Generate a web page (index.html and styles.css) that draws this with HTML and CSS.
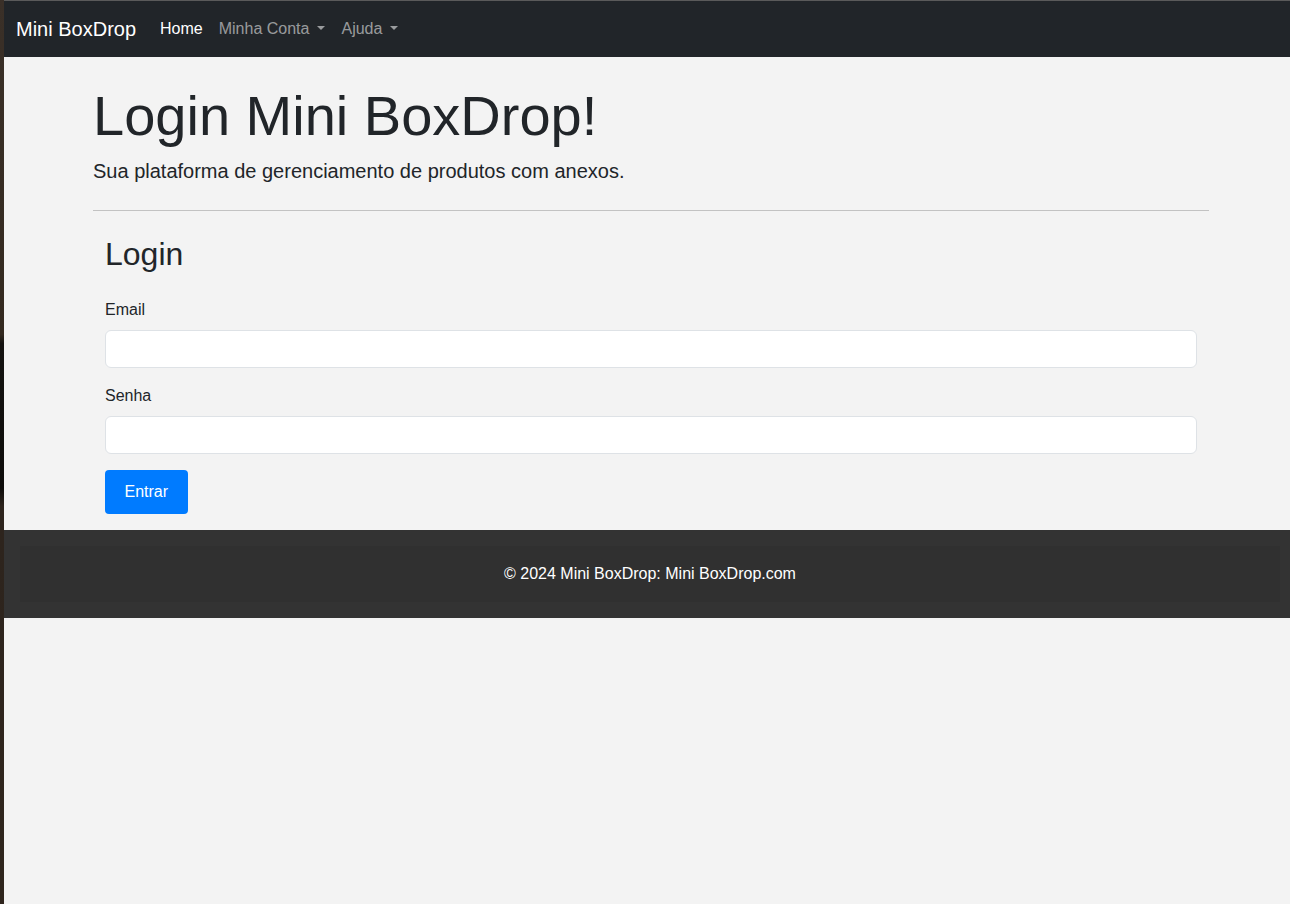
FILE: index.html
```html
<!DOCTYPE html>
<html lang="pt-BR">
<head>
<meta charset="utf-8">
<title>Login Mini BoxDrop</title>
<link rel="stylesheet" href="styles.css">
</head>
<body>
<div class="desktop">
  <div class="edge"></div>
  <div class="window">
    <nav class="navbar">
      <a class="brand" href="#">Mini BoxDrop</a>
      <ul class="nav">
        <li><a class="nav-link active" href="#">Home</a></li>
        <li><a class="nav-link dropdown" href="#">Minha Conta</a></li>
        <li><a class="nav-link dropdown" href="#">Ajuda</a></li>
      </ul>
    </nav>
    <main class="main">
      <h1 class="display">Login Mini BoxDrop!</h1>
      <p class="lead">Sua plataforma de gerenciamento de produtos com anexos.</p>
      <hr class="divider">
      <section class="login">
        <h2 class="login-title">Login</h2>
        <form class="form">
          <div class="form-group">
            <label class="label" for="email">Email</label>
            <input class="input" id="email" type="email">
          </div>
          <div class="form-group">
            <label class="label" for="senha">Senha</label>
            <input class="input" id="senha" type="password">
          </div>
          <button class="btn" type="button">Entrar</button>
        </form>
      </section>
    </main>
    <footer class="footer">
      <div class="footer-inner">© 2024 Mini BoxDrop: Mini BoxDrop.com</div>
    </footer>
  </div>
</div>
</body>
</html>
```
FILE: styles.css
```css
* { box-sizing: border-box; }
html, body { margin: 0; padding: 0; }
body {
  font-family: "Liberation Sans", Arial, sans-serif;
  font-size: 16px;
  line-height: 1.5;
  color: #212529;
  background: #f3f3f3;
}
.desktop {
  display: flex;
  min-height: 904px;
}
.edge {
  width: 4px;
  flex: none;
  background: linear-gradient(to bottom, #3a3028 0%, #33291f 37%, #141311 38%, #0d0c0a 54%, #2d241d 56%, #2f251d 100%);
}
.window {
  flex: 1;
  border-top: 1px solid #5a5a5a;
  background: #f3f3f3;
}
.navbar {
  height: 56px;
  background: #212529;
  display: flex;
  align-items: center;
  padding: 0 12px;
}
.brand {
  color: #fff;
  font-size: 20px;
  line-height: 30px;
  text-decoration: none;
  margin-right: 16px;
}
.nav {
  display: flex;
  list-style: none;
  margin: 0;
  padding: 0;
}
.nav-link {
  display: block;
  padding: 8px;
  color: rgba(255,255,255,.55);
  text-decoration: none;
  line-height: 24px;
}
.nav-link.active { color: #fff; }
.dropdown::after {
  content: "";
  display: inline-block;
  margin-left: .5em;
  vertical-align: .255em;
  border-top: .3em solid;
  border-right: .3em solid transparent;
  border-left: .3em solid transparent;
}
.main {
  margin: 0 81px 0 89px;
  padding-top: 25px;
}
.display {
  font-size: 56px;
  font-weight: 300;
  line-height: 1.2;
  margin: 0 0 7px;
}
.lead {
  font-size: 20px;
  line-height: 30px;
  margin: 0;
}
.divider {
  margin: 24px 0;
  border: 0;
  border-top: 1px solid #c2c2c2;
}
.login {
  padding: 0 12px 16px;
}
.login-title {
  font-size: 32px;
  font-weight: 400;
  line-height: 1.2;
  margin: 0 0 8px;
}
.form { margin-top: 24px; }
.form-group { margin-bottom: 16px; }
.label {
  display: block;
  margin-bottom: 8px;
}
.input {
  display: block;
  width: 100%;
  height: 38px;
  border: 1px solid #dee2e6;
  border-radius: 6px;
  background: #fff;
  font: inherit;
  padding: 6px 12px;
}
.btn {
  background: #007bff;
  color: #fff;
  border: 0;
  border-radius: 4px;
  font: inherit;
  line-height: 24px;
  padding: 10px 19.5px;
}
.footer {
  background: #333;
  padding: 16px 10px 16px 16px;
}
.footer-inner {
  background: #303030;
  color: #fff;
  text-align: center;
  padding: 16px;
  line-height: 24px;
}
```
